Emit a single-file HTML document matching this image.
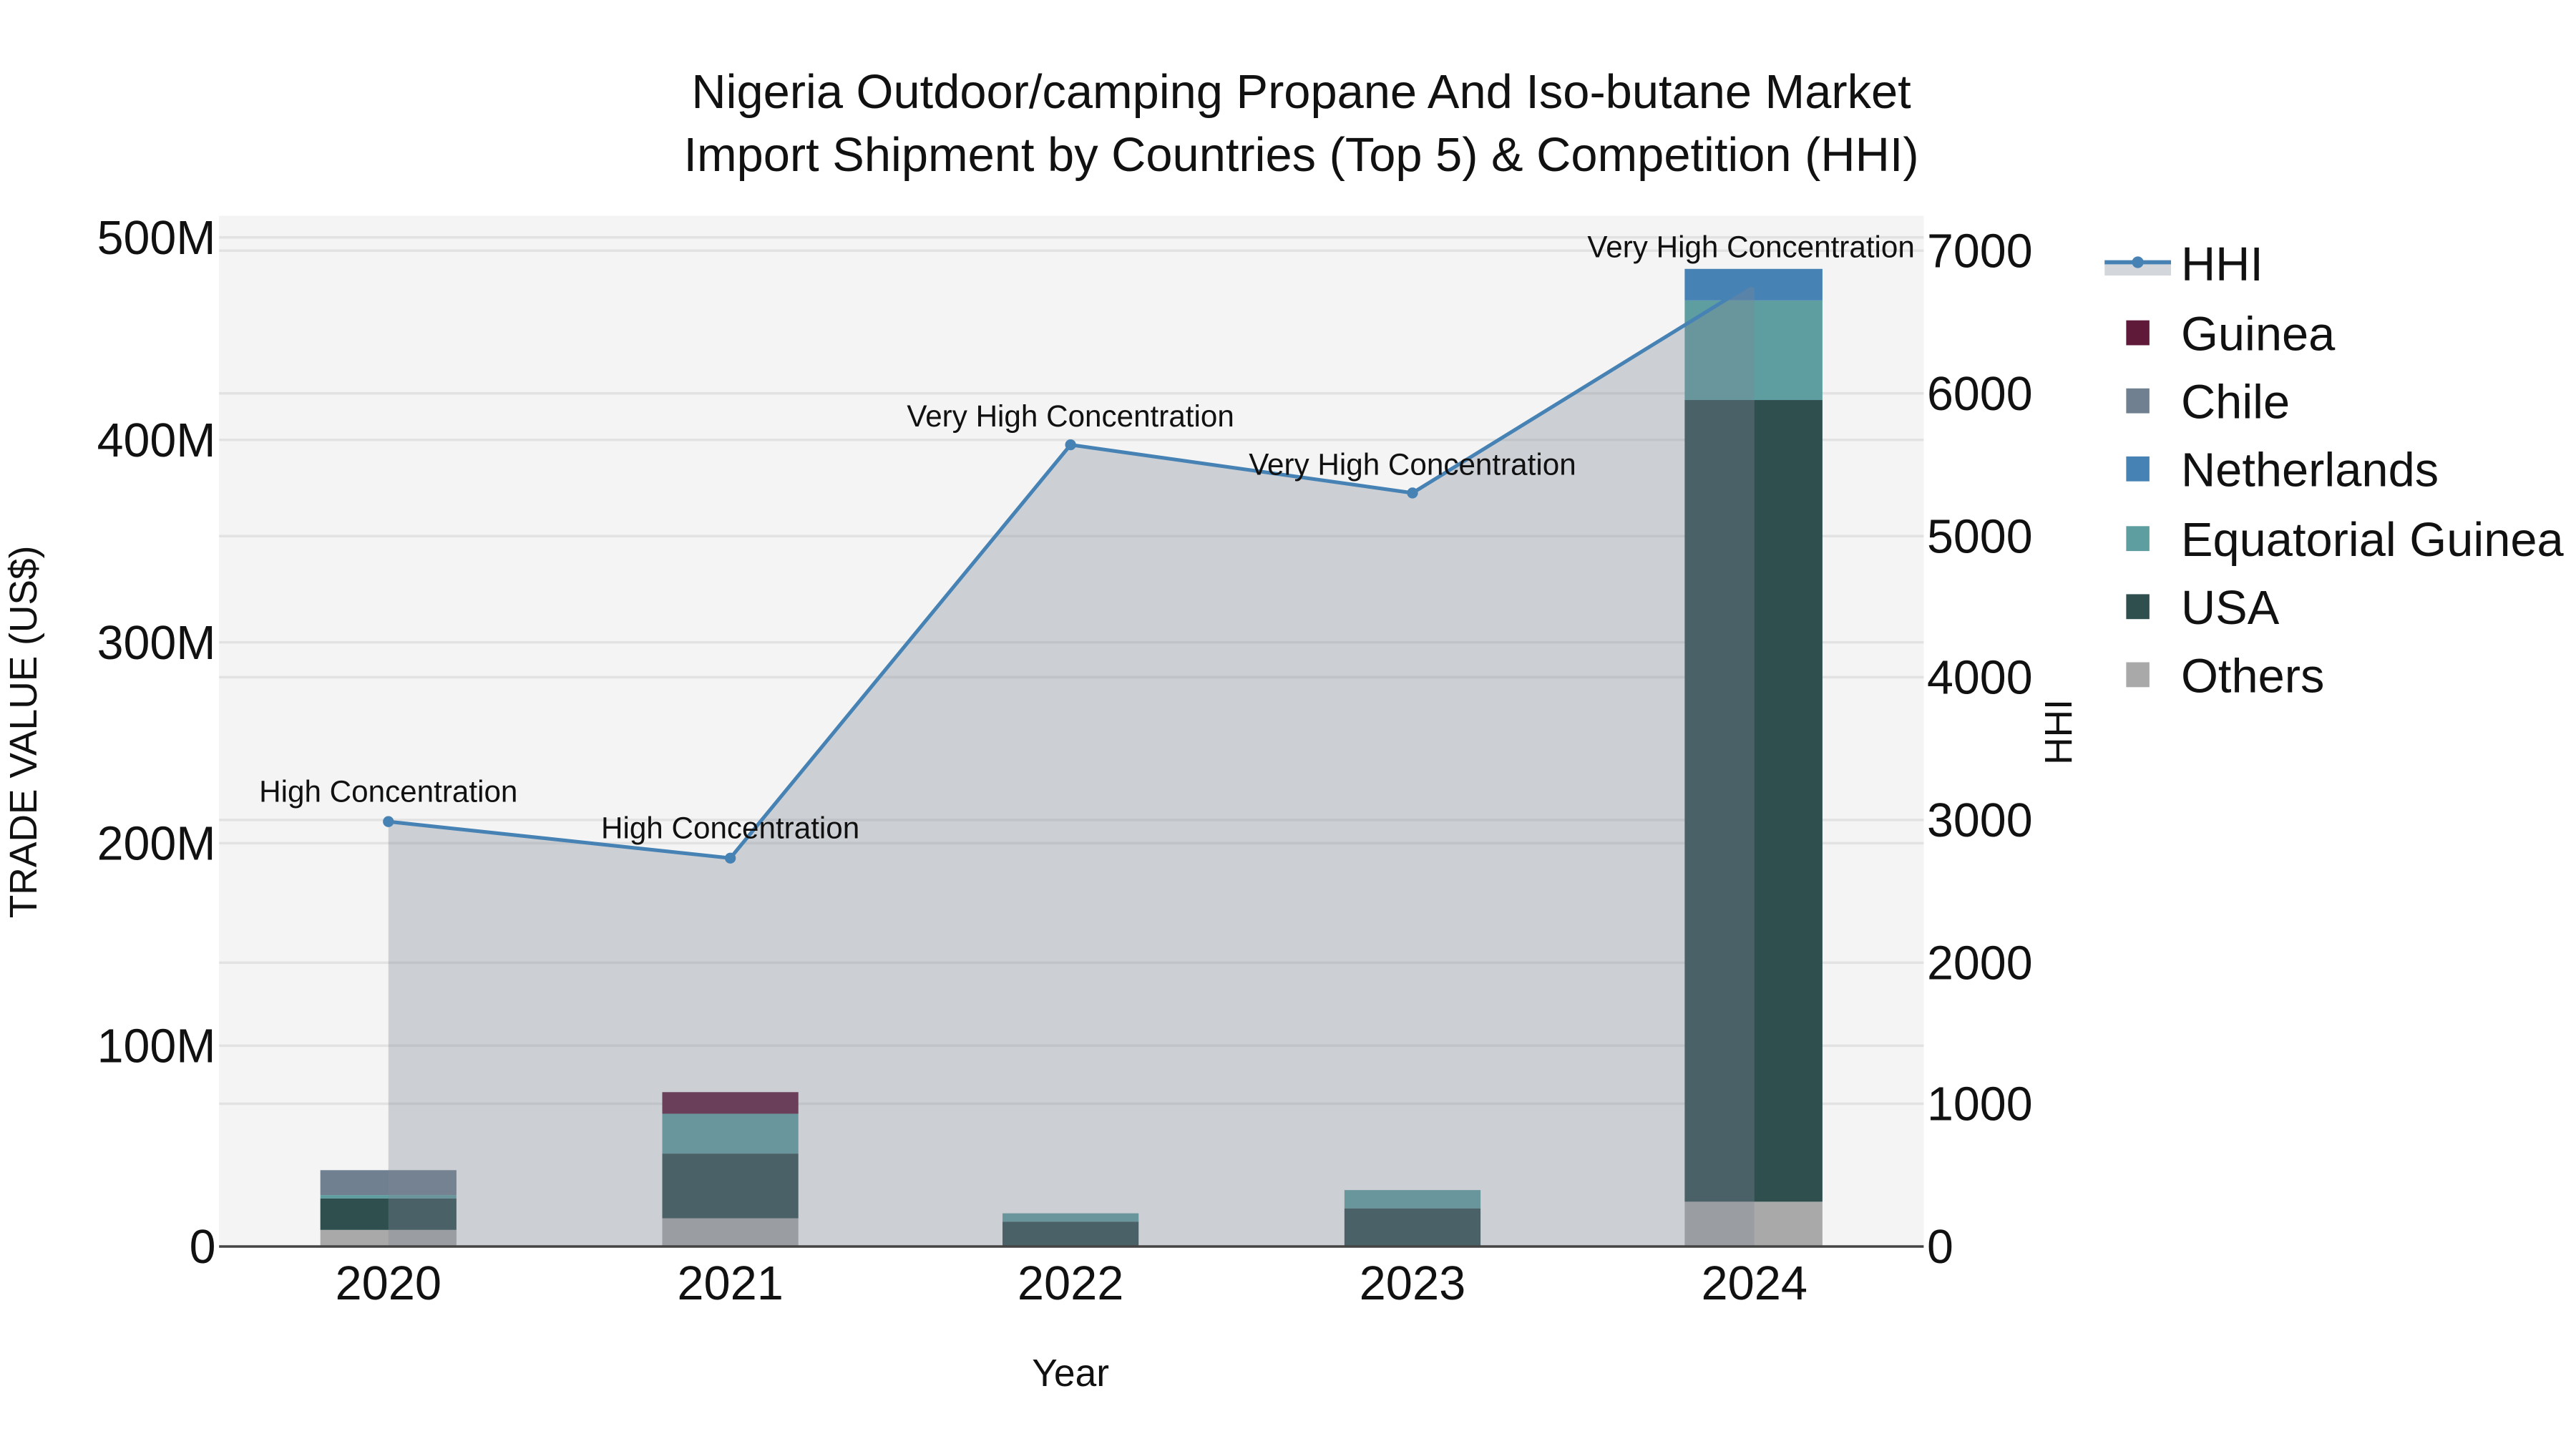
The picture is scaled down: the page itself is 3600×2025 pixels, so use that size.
<!DOCTYPE html>
<html><head><meta charset="utf-8"><style>
html,body{margin:0;padding:0;background:#fff;width:3600px;height:2025px;overflow:hidden}
svg{display:block}
text{font-family:"Liberation Sans",sans-serif;fill:#111}
</style></head><body>
<svg width="3600" height="2025" viewBox="0 0 1552 873" preserveAspectRatio="none" xmlns="http://www.w3.org/2000/svg">
<rect x="0" y="0" width="1552" height="873" fill="#fff"/>
<text x="784" y="65" font-size="28.8" text-anchor="middle">Nigeria Outdoor/camping Propane And Iso-butane Market</text>
<text x="784" y="103" font-size="28.8" text-anchor="middle">Import Shipment by Countries (Top 5) &amp; Competition (HHI)</text>
<rect x="132" y="130" width="1027" height="621" fill="#f4f4f4"/>
<g stroke="#e2e2e2" stroke-width="1.5">
<line x1="132" x2="1159" y1="630" y2="630"/><line x1="132" x2="1159" y1="508" y2="508"/><line x1="132" x2="1159" y1="387" y2="387"/><line x1="132" x2="1159" y1="265" y2="265"/><line x1="132" x2="1159" y1="143" y2="143"/>
<line x1="132" x2="1159" y1="665" y2="665"/><line x1="132" x2="1159" y1="580" y2="580"/><line x1="132" x2="1159" y1="494" y2="494"/><line x1="132" x2="1159" y1="408" y2="408"/><line x1="132" x2="1159" y1="323" y2="323"/><line x1="132" x2="1159" y1="237" y2="237"/><line x1="132" x2="1159" y1="151" y2="151"/>
</g>
<g>
<rect x="193" y="741" width="82" height="10" fill="#a9a9a9"/>
<rect x="193" y="722" width="82" height="19" fill="#2f4f4f"/>
<rect x="193" y="720" width="82" height="2" fill="#5f9ea0"/>
<rect x="193" y="705" width="82" height="15" fill="#708090"/>
<rect x="399" y="734" width="82" height="17" fill="#a9a9a9"/>
<rect x="399" y="695" width="82" height="39" fill="#2f4f4f"/>
<rect x="399" y="671" width="82" height="24" fill="#5f9ea0"/>
<rect x="399" y="658" width="82" height="13" fill="#5f1a3a"/>
<rect x="604" y="736" width="82" height="15" fill="#2f4f4f"/>
<rect x="604" y="731" width="82" height="5" fill="#5f9ea0"/>
<rect x="810" y="728" width="82" height="23" fill="#2f4f4f"/>
<rect x="810" y="717" width="82" height="11" fill="#5f9ea0"/>
<rect x="1015" y="724" width="83" height="27" fill="#a9a9a9"/>
<rect x="1015" y="241" width="83" height="483" fill="#2f4f4f"/>
<rect x="1015" y="181" width="83" height="60" fill="#5f9ea0"/>
<rect x="1015" y="162" width="83" height="19" fill="#4682b4"/>
</g>
<path d="M234,495 L440,517 L645,268 L851,297 L1057,170 L1057,751 L234,751 Z" fill="rgb(125,135,150)" fill-opacity="0.34"/>
<polyline points="234,495 440,517 645,268 851,297 1057,170" fill="none" stroke="#4682b4" stroke-width="2.2"/>
<g fill="#4682b4"><circle cx="234" cy="495" r="3.3"/><circle cx="440" cy="517" r="3.3"/><circle cx="645" cy="268" r="3.3"/><circle cx="851" cy="297" r="3.3"/><circle cx="1057" cy="170" r="3.3"/></g>
<line x1="132" x2="1159" y1="751" y2="751" stroke="#444" stroke-width="1.5"/>
<g font-size="18.2" text-anchor="middle">
<text x="234" y="483">High Concentration</text>
<text x="440" y="505">High Concentration</text>
<text x="645" y="257">Very High Concentration</text>
<text x="851" y="286">Very High Concentration</text>
<text x="1055" y="155">Very High Concentration</text>
</g>
<g font-size="28.6" text-anchor="end">
<text x="130" y="761">0</text><text x="130" y="640">100M</text><text x="130" y="518">200M</text><text x="130" y="397">300M</text><text x="130" y="275">400M</text><text x="130" y="153">500M</text>
</g>
<g font-size="28.6">
<text x="1161" y="761">0</text><text x="1161" y="675">1000</text><text x="1161" y="590">2000</text><text x="1161" y="504">3000</text><text x="1161" y="418">4000</text><text x="1161" y="333">5000</text><text x="1161" y="247">6000</text><text x="1161" y="161">7000</text>
</g>
<g font-size="28.8" text-anchor="middle">
<text x="234" y="783">2020</text><text x="440" y="783">2021</text><text x="645" y="783">2022</text><text x="851" y="783">2023</text><text x="1057" y="783">2024</text>
</g>
<text x="645" y="835" font-size="23" text-anchor="middle">Year</text>
<text transform="translate(22,441) rotate(-90)" font-size="23" text-anchor="middle">TRADE VALUE (US$)</text>
<text transform="translate(1248,441) rotate(-90)" font-size="23" text-anchor="middle">HHI</text>
<rect x="1268" y="157" width="40" height="9" fill="rgb(125,135,150)" fill-opacity="0.34"/>
<line x1="1268" x2="1308" y1="158" y2="158" stroke="#4682b4" stroke-width="2.5"/>
<circle cx="1288" cy="158" r="3.5" fill="#4682b4"/>
<rect x="1281" y="193" width="14" height="15" fill="#5f1a3a"/>
<rect x="1281" y="234" width="14" height="15" fill="#708090"/>
<rect x="1281" y="275" width="14" height="15" fill="#4682b4"/>
<rect x="1281" y="317" width="14" height="15" fill="#5f9ea0"/>
<rect x="1281" y="358" width="14" height="15" fill="#2f4f4f"/>
<rect x="1281" y="399" width="14" height="15" fill="#a9a9a9"/>
<g font-size="28.8">
<text x="1314" y="169">HHI</text>
<text x="1314" y="211">Guinea</text>
<text x="1314" y="252">Chile</text>
<text x="1314" y="293">Netherlands</text>
<text x="1314" y="335">Equatorial Guinea</text>
<text x="1314" y="376">USA</text>
<text x="1314" y="417">Others</text>
</g>
</svg>
</body></html>
